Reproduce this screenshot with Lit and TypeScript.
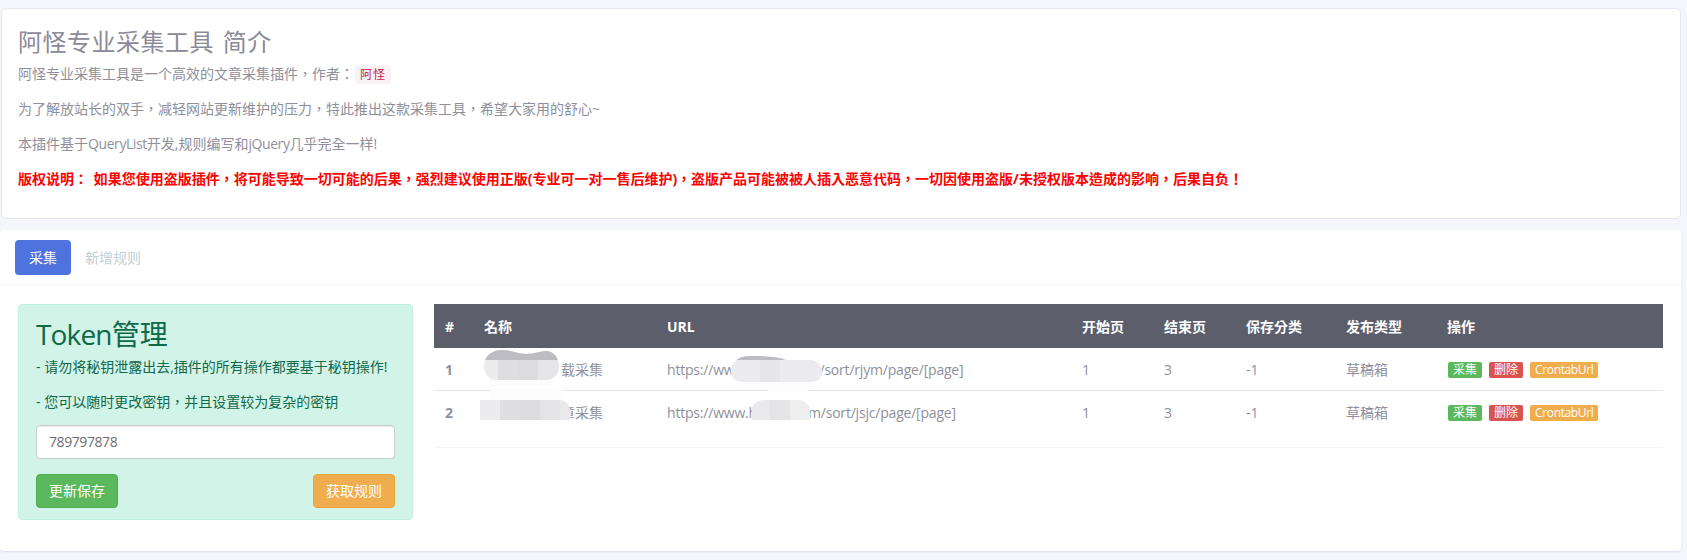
import { LitElement, html, svg, css } from "lit";
import { customElement } from "lit/decorators.js";

interface Piece { text?: string; gap?: number }
interface Row {
  id: number;
  name: Piece[];
  url: Piece[];
}

const rows: Row[] = [
  { id: 1, name: [{ gap: 77 }, { text: "载采集" }], url: [{ text: "https://ww" }, { gap: 85 }, { text: "/sort/rjym/page/[page]" }] },
  { id: 2, name: [{ gap: 77 }, { text: "章采集" }], url: [{ text: "https://www.h" }, { gap: 51 }, { text: "m/sort/jsjc/page/[page]" }] },
];

// Redaction smudges drawn over the table, in table-local coordinates
const smudgeArt = svg`
  <defs>
    <clipPath id="sa"><path d="M50 62C50 52 58 46 68 46C78 46 84 50 92 50C100 50 106 47 112 47C120 47 125 54 125 62C125 70 120 76 112 76L63 76C55 76 50 70 50 62Z" /></clipPath>
    <clipPath id="sb"><path d="M46 96L126 96C132 96 137 102 137 110C137 113 135 116 133 116L46 116Z" /></clipPath>
    <clipPath id="sc"><path d="M297 68C297 58 304 52 316 52C332 52 345 53 352 56L376 56C384 56 388 62 388 68C388 74 384 78 376 78L310 78C302 78 297 74 297 68Z" /></clipPath>
    <clipPath id="sd"><path d="M318 116L318 106C318 100 324 96 330 96L364 96C371 96 376 101 376 108L376 116Z" /></clipPath>
  </defs>
  <rect x="55" y="74" width="65" height="8" rx="4" fill="#fcfcfd" />
  <g clip-path="url(#sa)">
    <rect x="50" y="46" width="14" height="30" fill="#ececee" />
    <rect x="64" y="46" width="20" height="30" fill="#dedee1" />
    <rect x="84" y="46" width="20" height="30" fill="#dcdcdf" />
    <rect x="104" y="46" width="21" height="30" fill="#e6e6e9" />
    <rect x="50" y="46" width="75" height="10" fill="#bcbcc2" />
  </g>
  <rect x="56" y="84" width="74" height="14" rx="6" fill="#fdfdfe" />
  <g clip-path="url(#sb)">
    <rect x="46" y="96" width="20" height="20" fill="#ececee" />
    <rect x="66" y="96" width="20" height="20" fill="#dfdfe2" />
    <rect x="86" y="96" width="20" height="20" fill="#dcdcdf" />
    <rect x="106" y="96" width="20" height="20" fill="#e4e4e7" />
    <rect x="126" y="96" width="11" height="20" fill="#e9e9eb" />
  </g>
  <rect x="302" y="76" width="80" height="8" rx="4" fill="#fdfdfe" />
  <rect x="334" y="80" width="40" height="9" fill="#fdfdfe" />
  <g clip-path="url(#sc)">
    <rect x="297" y="52" width="29" height="26" fill="#ececee" />
    <rect x="326" y="52" width="20" height="26" fill="#e6e6e8" />
    <rect x="346" y="52" width="42" height="26" fill="#ebebed" />
    <rect x="297" y="52" width="91" height="4" fill="#bcbcc2" />
  </g>
  <g clip-path="url(#sd)">
    <rect x="318" y="96" width="18" height="20" fill="#e9e9eb" />
    <rect x="336" y="96" width="20" height="20" fill="#e4e4e6" />
    <rect x="356" y="96" width="20" height="20" fill="#eeeeef" />
  </g>
`;

@customElement("app-root")
export class AppRoot extends LitElement {
  static styles = css`
    :host {
      display: block;
      height: 560px;
      overflow: hidden;
      box-sizing: border-box;
      background: #f4f6fb;
      padding: 8px 6px 0 0;
      font: 14px/21px "Open Sans", "Noto Sans CJK TC", sans-serif;
      color: #8f8f9b;
    }
    .l {
      letter-spacing: -0.03em;
    }
    .intro {
      margin-left: 1px;
      height: 211px;
      box-sizing: border-box;
      background: #fff;
      border: 1px solid #e6e7f2;
      border-radius: 5px;
      padding: 14px 16px;
    }
    h3 {
      margin: 0 0 2px;
      font-size: 24px;
      font-weight: 400;
      line-height: 38px;
      letter-spacing: 0.5px;
      word-spacing: 2px;
      color: #8a8a98;
    }
    p {
      margin: 0 0 14px;
    }
    .author {
      display: inline-block;
      padding: 0 5px;
      line-height: 19px;
      font-size: 12px;
      letter-spacing: 1px;
      background: #f9f2f4;
      color: #c7254e;
      border-radius: 4px;
      margin: -1px 0 -1px 1px;
    }
    .warn {
      color: #ff0000;
      font-weight: 700;
      word-spacing: 2px;
    }
    .main {
      margin-top: 11px;
      height: 321px;
      background: #fff;
      border-radius: 4px;
      box-shadow: 0 1px 2px rgba(120, 125, 160, 0.2);
    }
    .tabs {
      display: flex;
      align-items: center;
      gap: 14px;
      height: 55px;
      box-sizing: border-box;
      padding: 10px 15px;
      border-bottom: 1px solid #f5f5f8;
    }
    .tab {
      height: 35px;
      line-height: 35px;
      padding: 0 14px;
      border-radius: 4px;
      color: #c2cfd6;
    }
    .tab.active {
      background: #4e73df;
      color: #fff;
    }
    .tab.plain {
      padding: 0;
    }
    .body {
      display: flex;
      align-items: flex-start;
      padding: 19px 18px 0;
      gap: 21px;
    }
    .token {
      flex: none;
      width: 395px;
      height: 216px;
      box-sizing: border-box;
      background: #d2f4e8;
      border: 1px solid #bef0df;
      border-radius: 4px;
      padding: 9px 17px 0;
      color: #0f6848;
    }
    .token h1 {
      margin: 0;
      font-size: 28px;
      font-weight: 400;
      line-height: 40px;
    }
    .token p {
      margin: 2px 0 14px;
    }
    .token p + p {
      margin: 0 0 13px;
    }
    .input {
      height: 34px;
      box-sizing: border-box;
      background: #fff;
      border: 1px solid #ccc;
      border-radius: 4px;
      padding: 0 12px;
      line-height: 32px;
      color: #6d6d75;
      box-shadow: inset 0 1px 1px rgba(0, 0, 0, 0.075);
    }
    .actions {
      display: flex;
      justify-content: space-between;
      margin-top: 15px;
    }
    .btn {
      height: 34px;
      line-height: 32px;
      box-sizing: border-box;
      padding: 0 12px;
      border-radius: 4px;
      color: #fff;
      border: 1px solid;
    }
    .green {
      background: #5cb85c;
      border-color: #4cae4c;
    }
    .orange {
      background: #f0ad4e;
      border-color: #eea236;
    }
    .red {
      background: #d9534f;
      border-color: #d43f3a;
    }
    .table-wrap {
      position: relative;
      flex: none;
      width: 1229px;
      height: 143px;
      border-bottom: 1px solid #f5f5f8;
    }
    table {
      width: 100%;
      table-layout: fixed;
      border-collapse: collapse;
    }
    col.c1 { width: 38px; }
    col.c2 { width: 183px; }
    col.c3 { width: 415px; }
    col.c4 { width: 82px; }
    col.c5 { width: 82px; }
    col.c6 { width: 100px; }
    col.c7 { width: 101px; }
    th {
      height: 44px;
      padding: 0 0 0 12px;
      text-align: left;
      font-weight: 700;
      background: #5c5e6b;
      color: #fff;
    }
    td {
      height: 42px;
      padding: 0 0 0 12px;
      border-bottom: 1px solid #e4e5f0;
      white-space: nowrap;
    }
    tr:last-child td {
      border-bottom: 0;
    }
    th:first-child,
    td.num {
      padding-left: 11px;
    }
    td.num {
      font-weight: 700;
    }
    td.url {
      letter-spacing: -0.2px;
    }
    .gap {
      display: inline-block;
    }
    .ops {
      display: flex;
      gap: 5px;
      padding-top: 2px;
    }
    .label {
      height: 18px;
      line-height: 16px;
      box-sizing: border-box;
      padding: 0 5px;
      font-size: 12px;
      color: #fff;
      border: 1px solid;
      border-radius: 3px;
    }
    .smudges {
      position: absolute;
      left: 0;
      top: 0;
      width: 1229px;
      height: 143px;
      pointer-events: none;
    }
  `;

  private piece(p: Piece) {
    return p.text !== undefined
      ? p.text
      : html`<span class="gap" style="width:${p.gap}px"></span>`;
  }

  render() {
    return html`
      <section class="intro">
        <h3>阿怪专业采集工具 简介</h3>
        <p>阿怪专业采集工具是一个高效的文章采集插件，作者：<span class="author">阿怪</span></p>
        <p>为了解放站长的双手，减轻网站更新维护的压力，特此推出这款采集工具，希望大家用的舒心~</p>
        <p>本插件基于<span class="l">QueryList</span>开发,规则编写和<span class="l">jQuery</span>几乎完全一样!</p>
        <p class="warn">版权说明： 如果您使用盗版插件，将可能导致一切可能的后果，强烈建议使用正版(专业可一对一售后维护)，盗版产品可能被被人插入恶意代码，一切因使用盗版/未授权版本造成的影响，后果自负！</p>
      </section>
      <section class="main">
        <nav class="tabs">
          <div class="tab active">采集</div>
          <div class="tab plain">新增规则</div>
        </nav>
        <div class="body">
          <aside class="token">
            <h1><span class="l">Token</span>管理</h1>
            <p>- 请勿将秘钥泄露出去,插件的所有操作都要基于秘钥操作!</p>
            <p>- 您可以随时更改密钥，并且设置较为复杂的密钥</p>
            <div class="input"><span class="l">789797878</span></div>
            <div class="actions">
              <div class="btn green">更新保存</div>
              <div class="btn orange">获取规则</div>
            </div>
          </aside>
          <div class="table-wrap">
            <table>
              <colgroup>
                <col class="c1" /><col class="c2" /><col class="c3" /><col class="c4" />
                <col class="c5" /><col class="c6" /><col class="c7" /><col />
              </colgroup>
              <thead>
                <tr>
                  <th>#</th><th>名称</th><th>URL</th><th>开始页</th>
                  <th>结束页</th><th>保存分类</th><th>发布类型</th><th>操作</th>
                </tr>
              </thead>
              <tbody>
                ${rows.map(
                  (r) => html`
                    <tr>
                      <td class="num">${r.id}</td>
                      <td>${r.name.map((p) => this.piece(p))}</td>
                      <td class="url">${r.url.map((p) => this.piece(p))}</td>
                      <td>1</td>
                      <td>3</td>
                      <td>-1</td>
                      <td>草稿箱</td>
                      <td>
                        <div class="ops">
                          <span class="label green">采集</span>
                          <span class="label red">删除</span>
                          <span class="label orange"><span class="l">CrontabUrl</span></span>
                        </div>
                      </td>
                    </tr>
                  `
                )}
              </tbody>
            </table>
            <svg class="smudges" viewBox="0 0 1229 143">${smudgeArt}</svg>
          </div>
        </div>
      </section>
    `;
  }
}
